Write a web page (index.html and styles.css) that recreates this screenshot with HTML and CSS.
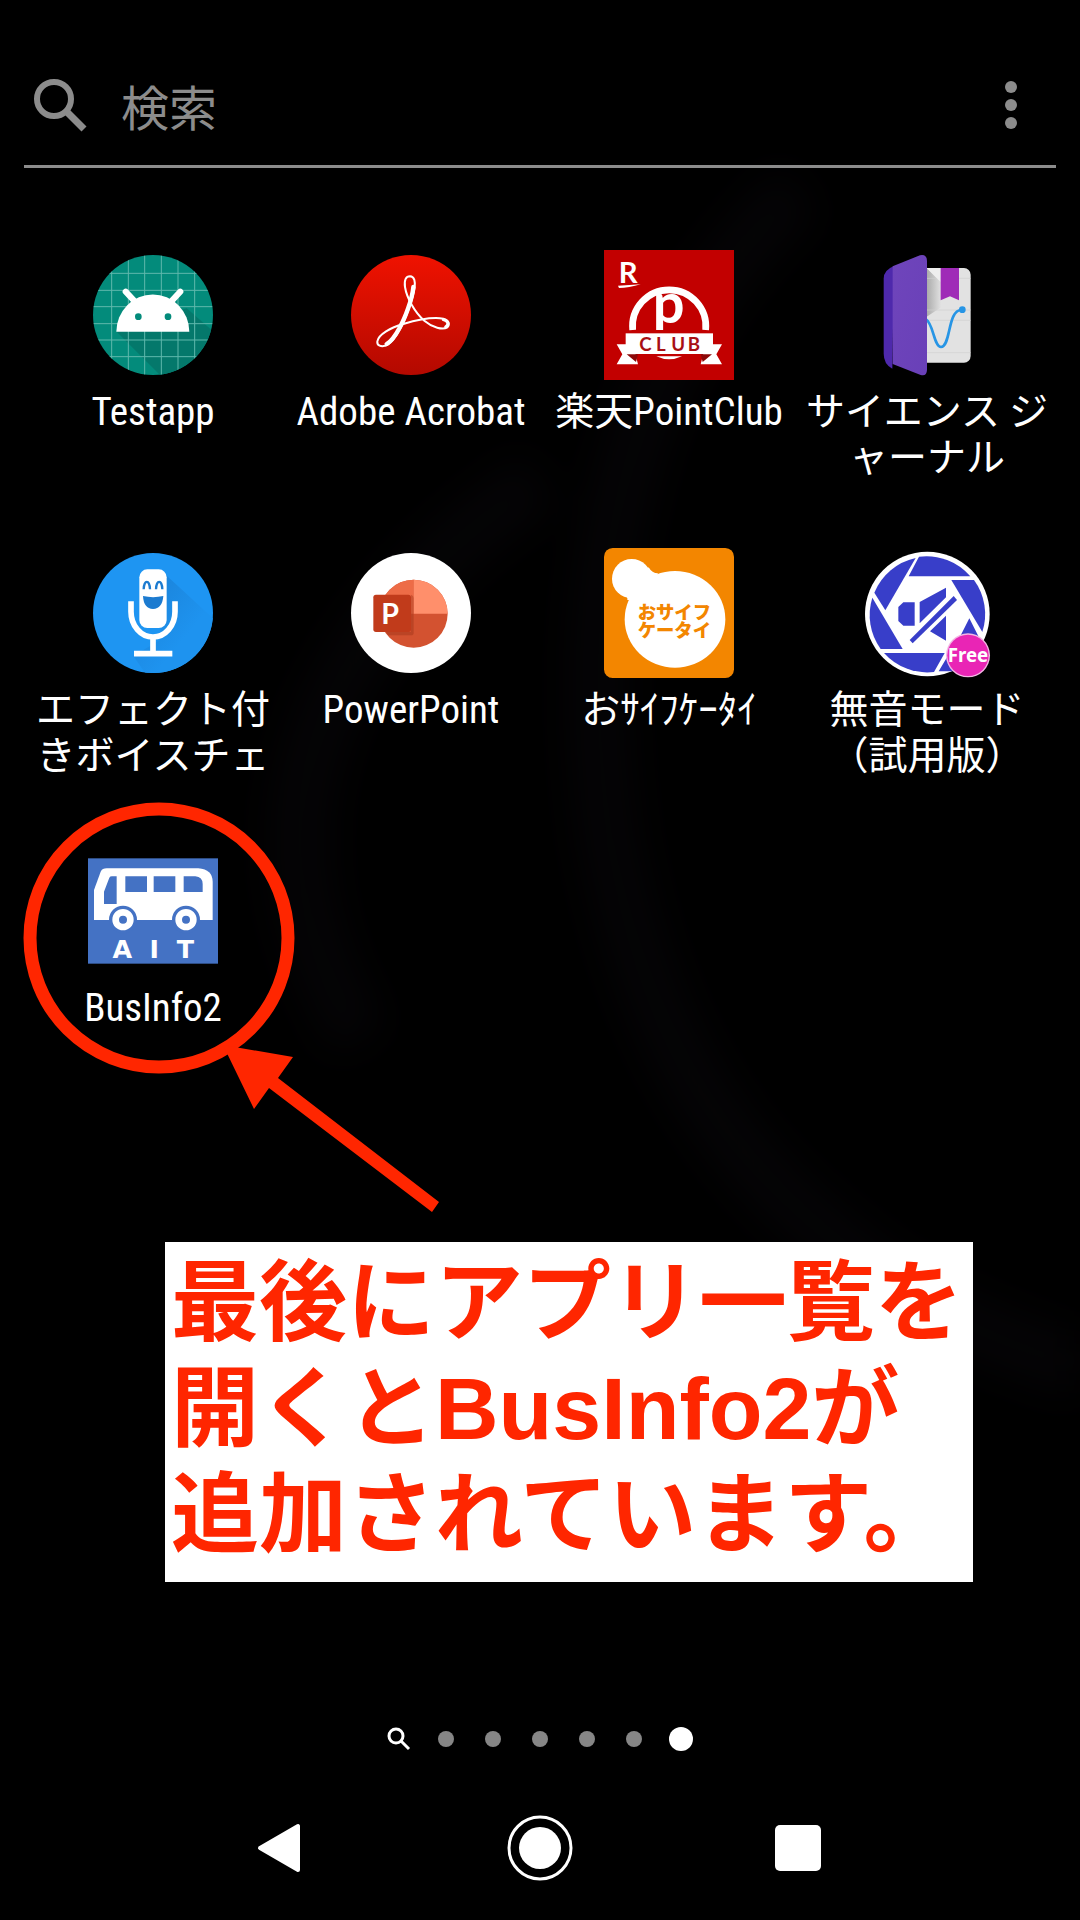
FILE: index.html
```html
<!DOCTYPE html>
<html lang="ja">
<head>
<meta charset="utf-8">
<meta name="viewport" content="width=device-width, initial-scale=1">
<title>アプリ一覧</title>
<link rel="stylesheet" href="styles.css">
</head>
<body>
<svg class="wallpaper" viewBox="0 0 1080 1920" preserveAspectRatio="none" aria-hidden="true">
  <path d="M800 190C640 330 570 560 610 840C650 1060 740 1170 860 1260C940 1320 1020 1350 1090 1370"/>
  <path d="M540 480C300 640 240 840 360 1040"/>
</svg>
<div class="screen">
  <header class="search">
    <label class="search-icon" for="q" aria-label="検索">
      <svg viewBox="0 0 54 54"><circle cx="21" cy="21" r="17"/><path class="handle" d="M34 34L51 51"/></svg>
    </label>
    <input class="search-input" id="q" type="search" placeholder="検索">
    <button class="more" type="button" aria-label="メニュー"><i></i><i></i><i></i></button>
  </header>

  <main>
    <nav class="apps" aria-label="アプリ">
      <a class="app" href="#">
        <svg class="icon" viewBox="204 61 390 390" aria-hidden="true">
          <clipPath id="c1"><circle cx="399" cy="256" r="180"/></clipPath>
          <g clip-path="url(#c1)">
            <rect x="204" y="61" width="390" height="390" fill="#038b7b"/>
            <path d="M290 306L440 456H620V340L500 236Z" fill="#04786b"/>
            <path d="M275 61V451M325 61V451M374 61V451M424 61V451M474 61V451M524 61V451M204 131H594M204 182H594M204 231H594M204 282H594M204 331H594M204 381H594" stroke="#5fb8ac" stroke-width="3"/>
          </g>
          <path d="M289 306A109 111 0 0 1 508 306Z" fill="#fff"/>
          <path d="M317 186L347 218M481 186L451 218" stroke="#fff" stroke-width="18" stroke-linecap="round"/>
          <circle cx="355" cy="261" r="10" fill="#038b7b"/><circle cx="444" cy="261" r="10" fill="#038b7b"/>
        </svg>
        <span class="name">Testapp</span>
      </a>
      <a class="app" href="#">
        <svg class="icon" viewBox="978 61 390 390" aria-hidden="true">
          <linearGradient id="g2" x2="0" y2="1"><stop stop-color="#ef1200"/><stop offset="1" stop-color="#b30900"/></linearGradient>
          <circle cx="1173" cy="256" r="180" fill="url(#g2)"/>
          <g fill="none" stroke="#fff" stroke-linecap="round">
            <path stroke-width="6" d="M1096 348C1084 352 1070 348 1072 335C1076 314 1112 294 1150 283C1190 271 1240 262 1270 267C1288 271 1290 285 1282 293C1268 302 1238 294 1213 273C1184 248 1160 204 1155 172C1152 150 1158 140 1170 140C1184 141 1186 156 1184 174C1178 212 1155 270 1140 298C1124 328 1110 344 1096 348"/>
            <path stroke-width="13" d="M1180 172C1177 208 1155 266 1139 294C1124 322 1110 337 1100 343"/>
            <path stroke-width="9" d="M1270 270C1286 275 1287 284 1277 292"/>
          </g>
        </svg>
        <span class="name">Adobe Acrobat</span>
      </a>
      <a class="app" href="#">
        <svg class="icon" viewBox="12 30 390 390" aria-hidden="true">
          <rect x="12" y="30" width="390" height="390" fill="#c20000"/>
          <path d="M98 270A110 110 0 1 1 317 270" fill="none" stroke="#fff" stroke-width="20"/>
          <path d="M54 137L122 133C100 140 75 144 57 144Z" fill="#fff"/>
          <text class="mark" x="56" y="128" font-size="88">R</text>
          <text class="mark" x="158" y="249" font-size="168">p</text>
          <rect x="160" y="270" width="60" height="10" fill="#c20000"/>
          <path d="M50 313H78V341H106L114 373H50L67 343ZM366 313H338V341H310L302 373H366L349 343Z" fill="#fff"/>
          <path d="M80 343L114 343L108 366ZM336 343L302 343L308 366Z" fill="#8c0808"/>
          <rect x="77" y="280" width="262" height="62" fill="#fff"/>
          <path d="M169 349H246Q207 367 169 349Z" fill="#fff"/>
          <text class="mark club" x="118 168 214 263" y="332" font-size="56">CLUB</text>
        </svg>
        <span class="name">楽天PointClub</span>
      </a>
      <a class="app" href="#">
        <svg class="icon" viewBox="6 30 390 390" aria-hidden="true">
          <linearGradient id="g4" x1="0" y1="0" x2="1" y2="1"><stop stop-color="#6f45bb"/><stop offset="1" stop-color="#6940b8"/></linearGradient>
          <linearGradient id="g5"><stop stop-color="#aaa"/><stop offset=".7" stop-color="#e2e2e2"/></linearGradient>
          <rect x="160" y="84" width="172" height="284" rx="20" fill="#e2e2e2"/>
          <path d="M200 84L262 146V190L200 230Z" fill="url(#g5)"/>
          <path d="M200 210H332M200 241H332M200 338H332M200 115H332" stroke="#d0d0d0" stroke-width="2"/>
          <path d="M200 84H242V126Z" fill="#eee"/>
          <path d="M242 84H297V181L270 169L242 181Z" fill="#9f2bb7"/>
          <path d="M198 238C220 250 222 321 243 321C273 321 262 210 304 210" fill="none" stroke="#2795e5" stroke-width="8"/>
          <circle cx="307" cy="209" r="10" fill="#2795e5"/>
          <path d="M102 78L97 386Q71 374 71 340V116Q71 90 102 78Z" fill="#4e29ac"/>
          <path d="M98 79L180 46Q200 42 201 62V390Q200 410 182 405L98 372Z" fill="url(#g4)"/>
        </svg>
        <span class="name">サイエンス ジ<br>ャーナル</span>
      </a>
      <a class="app" href="#">
        <svg class="icon" viewBox="204 54 390 390" aria-hidden="true">
          <clipPath id="c6"><circle cx="399" cy="249" r="180"/></clipPath>
          <linearGradient id="g6" x2="1" y2="1"><stop stop-color="#1a7fd4"/><stop offset=".6" stop-color="#1e93ef"/></linearGradient>
          <g clip-path="url(#c6)">
            <rect x="204" y="54" width="390" height="390" fill="#1e95f2"/>
            <path d="M432 130L600 284V450H390L340 378L420 330Z" fill="url(#g6)"/>
          </g>
          <rect x="358" y="118" width="82" height="176" rx="24" fill="#fff"/>
          <path d="M333 214V245A66 76 0 0 0 465 245V214M399 322V370M342 371H457" fill="none" stroke="#fff" stroke-width="17"/>
          <path d="M371 178C372 148 389 148 390 178M408 178C409 148 426 148 427 178" fill="none" stroke="#1c7bd0" stroke-width="7"/>
          <path d="M369 198Q399 205 430 198Q427 236 399 237Q371 236 369 198Z" fill="#1c7bd0"/>
        </svg>
        <span class="name">エフェクト付<br>きボイスチェ</span>
      </a>
      <a class="app" href="#">
        <svg class="icon" viewBox="978 54 390 390" aria-hidden="true">
          <circle cx="1173" cy="249" r="180" fill="#fff"/>
          <circle cx="1181" cy="251" r="102" fill="#d35230"/>
          <path d="M1181 251V149A102 102 0 0 0 1079 251Z" fill="#ed6c47"/>
          <path d="M1181 251V149A102 102 0 0 1 1283 251Z" fill="#ff8f6b"/>
          <path d="M1098 306H1173V194Q1181 196 1181 204V308Q1181 316 1173 316H1104Z" fill="#8e2a12" opacity=".35"/>
          <rect x="1060" y="194" width="113" height="112" rx="8" fill="#c13b1b"/>
          <text class="mark" x="1084" y="281" font-size="86">P</text>
        </svg>
        <span class="name">PowerPoint</span>
      </a>
      <a class="app" href="#">
        <svg class="icon" viewBox="192 54 390 390" aria-hidden="true">
          <rect x="192" y="54" width="390" height="390" rx="26" fill="#f38600"/>
          <circle cx="275" cy="146" r="59" fill="#fff"/>
          <ellipse cx="405" cy="268" rx="151" ry="145" fill="#fff"/>
          <path d="M326 112Q336 130 354 130L320 210H262Q264 200 252 196Z" fill="#fff"/>
          <text class="osaifu" font-size="55"><tspan x="293" y="266">おサイフ</tspan><tspan x="293" y="321">ケータイ</tspan></text>
        </svg>
        <span class="name">おｻｲﾌｹｰﾀｲ</span>
      </a>
      <a class="app" href="#">
        <svg class="icon" viewBox="966 54 390 390" aria-hidden="true">
          <circle cx="1162" cy="252" r="187" fill="#fff"/>
          <g fill="#383ec9">
            <path d="M1137 80A174 174 0 0 1 1291 139H1106Z"/>
            <path d="M1127 84L1036 241L1003 188A174 174 0 0 1 1127 84Z"/>
            <path d="M997 203L1088 357H1022A174 174 0 0 1 997 203Z"/>
            <path d="M1032 369H1214L1182 426A174 174 0 0 1 1032 369Z"/>
            <path d="M1234 150H1302A174 174 0 0 1 1327 306Z"/>
            <path d="M1288 265L1316 320H1260ZM1222 380L1196 424H1240Z"/>
            <path d="M1090 217H1124V287H1090L1075 273V231Z"/>
            <path d="M1139 216L1218 173V202L1139 280ZM1218 257V332L1170 304Z"/>
            <path d="M1241 198L1251 210L1118 340L1109 330Z"/>
          </g>
          <circle cx="1284" cy="376" r="66" fill="#f3b6e4"/>
          <circle cx="1284" cy="376" r="62" fill="#e925b5"/>
          <text class="free" x="1284" y="396" font-size="56">Free</text>
        </svg>
        <span class="name">無音モード<br>（試用版）</span>
      </a>
      <a class="app" href="#">
        <svg class="icon" viewBox="264 198 390 390" aria-hidden="true">
          <rect x="264" y="235" width="390" height="316" fill="#4472c4"/>
          <path d="M282 420V330L302 275Q307 265 320 265H595Q638 268 638 306V420Z" fill="#fff"/>
          <path d="M312 372V335L328 293Q330 289 336 289H350V372ZM376 289H441V336H376ZM461 289H526V336H461ZM551 289H586Q608 291 608 312V336H551Z" fill="#4472c4"/>
          <circle cx="369" cy="419" r="42" fill="#4472c4"/><circle cx="558" cy="419" r="42" fill="#4472c4"/>
          <circle cx="369" cy="419" r="22" fill="none" stroke="#fff" stroke-width="20"/>
          <circle cx="558" cy="419" r="22" fill="none" stroke="#fff" stroke-width="20"/>
          <text class="ait" x="367 463 556" y="535" font-size="76">AIT</text>
        </svg>
        <span class="name">BusInfo2</span>
        <svg class="pointer" viewBox="0 0 440 440" aria-hidden="true">
          <circle cx="159" cy="158" r="129"/>
          <path d="M223 265L293 277L278 298L439 422L432 432L269 308L254 329Z"/>
        </svg>
      </a>
    </nav>
    <p class="callout">最後にアプリ一覧を<br>開くとBusInfo2が<br>追加されています。</p>
  </main>

  <footer>
    <div class="pager" aria-label="ページ">
      <svg viewBox="0 0 24 24"><circle cx="9" cy="9" r="7"/><path d="M14 14L22 22"/></svg>
      <i></i><i></i><i></i><i></i><i></i><i class="current"></i>
    </div>
    <nav class="system" aria-label="システム">
      <button type="button" aria-label="戻る"><svg viewBox="0 0 66 66"><path d="M11 33L49 11V55Z" fill="#fff" stroke="#fff" stroke-width="4" stroke-linejoin="round"/></svg></button>
      <button type="button" aria-label="ホーム"><svg viewBox="0 0 66 66"><circle cx="33" cy="33" r="31" fill="none" stroke="#fff" stroke-width="3"/><circle cx="33" cy="33" r="21" fill="#fff"/></svg></button>
      <button type="button" aria-label="履歴"><svg viewBox="0 0 66 66"><rect x="10" y="10" width="46" height="46" rx="5" fill="#fff"/></svg></button>
    </nav>
  </footer>
</div>
</body>
</html>
```
FILE: styles.css
```css
* { box-sizing: border-box; }

body {
  margin: 0;
  background: #000;
  color: #fff;
  font-family: "Roboto Condensed", "Liberation Sans Narrow", Roboto, "Noto Sans CJK JP", sans-serif;
}

.wallpaper {
  position: absolute;
  inset: 0;
  width: 100%;
  height: 100%;
  z-index: -1;
  filter: blur(20px);
}
.wallpaper path { fill: none; stroke: #050406; stroke-width: 60; }

.screen {
  display: flex;
  flex-direction: column;
  min-height: 100vh;
  padding: 40px 24px 36px;
}

/* search bar */
.search {
  display: flex;
  align-items: center;
  height: 128px;
  padding: 4px 36px 0 9px;
  border-bottom: 3px solid #8c8c8c;
}
.search-icon { width: 54px; height: 54px; }
.search-icon svg { display: block; fill: none; stroke: #8c8c8c; stroke-width: 6; }
.search-icon .handle { stroke-width: 7; }
.search-input {
  flex: 1;
  min-width: 0;
  margin-left: 34px;
  padding: 0;
  border: 0;
  outline: 0;
  background: none;
  color: #fff;
  font: 48px "Noto Sans CJK JP", sans-serif;
}
.search-input::placeholder { color: #8c8c8c; opacity: 1; }
.more {
  display: flex;
  flex-direction: column;
  align-items: center;
  gap: 6px;
  width: 18px;
  padding: 0;
  border: 0;
  background: none;
}
.more i { width: 12px; height: 12px; border-radius: 50%; background: #8c8c8c; }

/* app grid */
.apps {
  display: grid;
  grid-template-columns: repeat(4, 1fr);
  grid-auto-rows: 298px;
  padding-top: 82px;
}
.app {
  position: relative;
  display: flex;
  flex-direction: column;
  align-items: center;
  gap: 9px;
  color: inherit;
  text-align: center;
  text-decoration: none;
}
.icon { width: 130px; height: 130px; }
.name { font-size: 39px; line-height: 46px; white-space: nowrap; }

.mark { font-family: Lato, sans-serif; font-weight: 700; fill: #fff; }
.mark.club { fill: #a80f14; }
.osaifu { font-family: "Noto Sans CJK JP", sans-serif; font-weight: 900; fill: #f38600; }
.free { font-family: "Noto Sans", sans-serif; font-weight: 700; fill: #fff; text-anchor: middle; }
.ait { font-family: "DejaVu Sans", sans-serif; font-weight: 700; fill: #fff; text-anchor: middle; }

/* red ring and arrow drawn over the highlighted app */
.pointer {
  position: absolute;
  top: -66px;
  left: -24px;
  width: 440px;
  height: 440px;
  pointer-events: none;
}
.pointer circle { fill: none; stroke: #ff2600; stroke-width: 13; }
.pointer path { fill: #ff2600; }

.callout {
  margin: 98px 83px 0 141px;
  padding: 8px 6px 14px;
  background: #fff;
  color: #ff2600;
  font: 700 88px/106px "Liberation Sans", "Noto Sans CJK JP", sans-serif;
  white-space: nowrap;
}

/* page indicator and system keys */
footer { margin-top: auto; }
.pager {
  display: grid;
  grid-template-columns: repeat(7, 24px);
  place-content: center;
  place-items: center;
  height: 24px;
  gap: 23px;
  margin-bottom: 61px;
}
.pager svg { width: 24px; height: 24px; fill: none; stroke: #fff; stroke-width: 3; }
.pager i { width: 16px; height: 16px; border-radius: 50%; background: #868686; }
.pager .current { width: 24px; height: 24px; background: #fff; }
.system { display: flex; justify-content: center; gap: 192px; height: 72px; align-items: center; }
.system button { width: 66px; height: 66px; padding: 0; border: 0; background: none; }
.system svg { display: block; width: 66px; height: 66px; }
```
